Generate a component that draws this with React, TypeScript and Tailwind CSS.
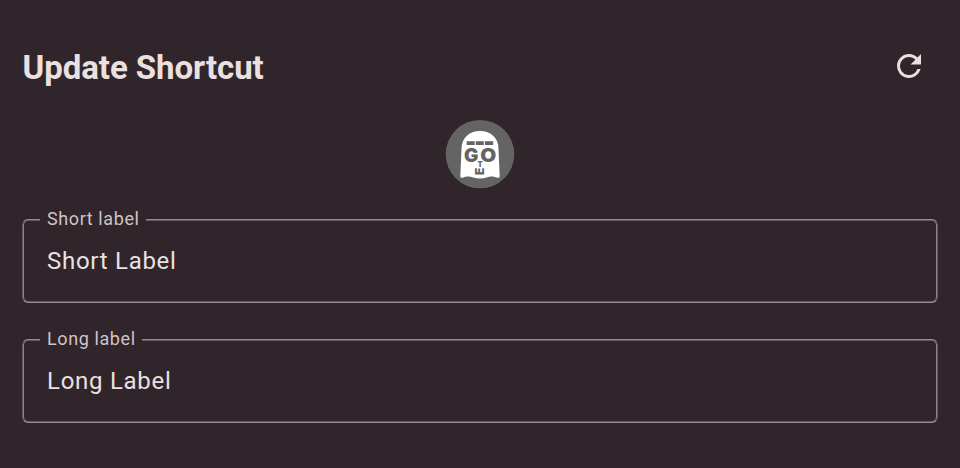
function RefreshIcon() {
  return (
    <svg viewBox="0 0 24 24" className="size-9 fill-[#ebe0e0]" aria-label="Reset">
      <path d="M17.65 6.35A7.96 7.96 0 0 0 12 4a8 8 0 1 0 7.73 10h-2.08A6 6 0 1 1 12 6c1.66 0 3.14.69 4.22 1.78L13 11h7V4z" />
    </svg>
  );
}

function GhostIcon() {
  return (
    <svg
      viewBox="0 0 70 70"
      className="size-[70px] font-['Inter','Liberation_Sans',sans-serif] font-black"
      aria-label="Shortcut icon"
    >
      <circle cx="35" cy="35.3" r="34" fill="#000" opacity=".3" />
      <circle cx="35" cy="34.3" r="34.3" fill="#646464" />
      <path
        d="M16.5 29C16.5 18 24 11 35 11s18.500 7 18.500 18L54.700 56Q54.800 58.200 52.500 57.800C47 56 45 56.500 41.500 57.600Q35 59.600 28.500 57.600C25 56.500 22 56 17.500 57.800Q15.200 58.200 15.300 56z"
        fill="#fff"
      />
      <path d="M21.700 21.300h8v3.600h-8zM30.800 21.300h8v3.600h-8zM39.900 21.300h8.300v3.600h-8.300z" fill="#646464" />
      <g fill="#646464">
        <text x="19" y="41.700" fontSize="18.500" textLength="14.400" lengthAdjust="spacingAndGlyphs">G</text>
        <text x="35.300" y="41.700" fontSize="18.500" textLength="16" lengthAdjust="spacingAndGlyphs">O</text>
        <text x="35" y="47" fontSize="7.500" textAnchor="middle">T</text>
        <text transform="translate(39.300 54.900) rotate(-90)" x="0" y="0" fontSize="11.800">E</text>
      </g>
    </svg>
  );
}

function OutlinedField({ label, value }: { label: string; value: string }) {
  return (
    <label className="relative flex h-[84px] items-center rounded-[6px] border border-x-[#63595e] border-y-[#968b90] pl-6 shadow-[inset_1px_0_0_#8c8186,inset_-1px_0_0_#8c8186,inset_0_1px_0_#63595e,inset_0_-1px_0_#63595e]">
      <span className="absolute -top-[12px] left-[17px] bg-[#2f252a] pr-[6px] pl-[7px] text-[18px] leading-[22px] tracking-[0.600px] text-[#d0c3c8]">
        {label}
      </span>
      <span className="text-[24px] leading-9 tracking-[0.720px] text-[#ebe0e0]">{value}</span>
    </label>
  );
}

export default function App() {
  return (
    <main className="flex h-[468px] w-[960px] flex-col bg-[#2f252a] px-[22px] pt-12 font-['Roboto',sans-serif]">
      <header className="flex h-9 items-center justify-between pr-[11px]">
        <h1 className="pt-1 pl-[0.500px] text-[33px] leading-10 font-bold tracking-[-0.060px] text-[#ebe0e0]">
          Update Shortcut
        </h1>
        <RefreshIcon />
      </header>
      <div className="mt-9 flex justify-center">
        <GhostIcon />
      </div>
      <form className="mt-[29px] flex flex-col gap-9">
        <OutlinedField label="Short label" value="Short Label" />
        <OutlinedField label="Long label" value="Long Label" />
      </form>
    </main>
  );
}
